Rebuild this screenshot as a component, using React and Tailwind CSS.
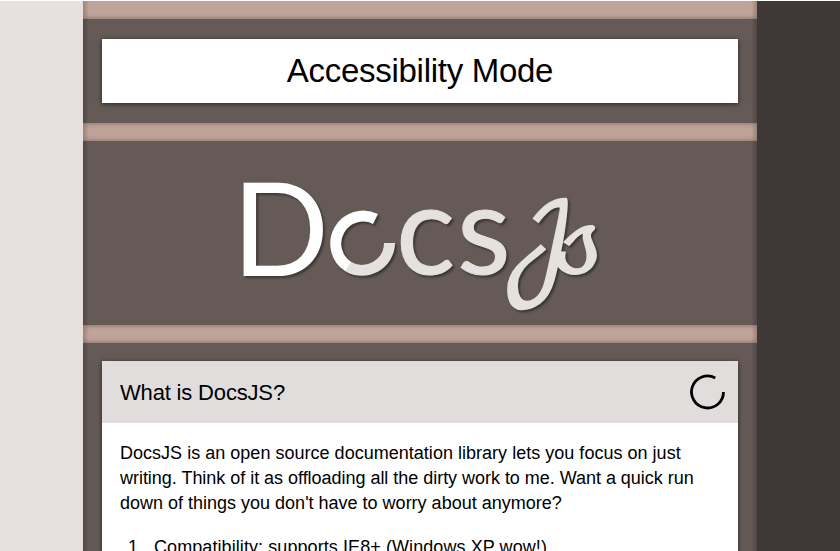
function Logo() {
  return (
    <svg
      className="block h-[184px] w-[674px] [filter:drop-shadow(2px_2px_1px_rgba(0,0,0,0.4))]"
      viewBox="83 141 674 184"
      role="img"
      aria-label="DocsJs"
    >
      <g fontFamily="Lato, sans-serif">
        <text x="232" y="276" fontSize="130" fill="#fff" textLength="97" lengthAdjust="spacingAndGlyphs">D</text>
        <text x="396" y="274" fontSize="124" fill="#e4e1df" stroke="#e4e1df" strokeWidth="1">c</text>
        <text x="457" y="274" fontSize="124" fill="#e4e1df" stroke="#e4e1df" strokeWidth="1">s</text>
      </g>
      {/* Two-tone progress ring */}
      <path d="M389.5 243 A27.5 27.5 0 0 1 348 266.5" fill="none" stroke="#e4e1df" strokeWidth="11" />
      <path d="M348.3 266.7 A27.5 27.5 0 0 1 375.5 219" fill="none" stroke="#fff" strokeWidth="11" />
      <g fontFamily="'DejaVu Math TeX Gyre', 'Liberation Serif', serif" fill="#e4e1df" stroke="#e4e1df" strokeWidth="2.4">
        <text transform="translate(501 281) scale(0.91 1.07)" fontSize="100">𝒥</text>
        <text transform="translate(549 272) scale(0.93 0.88)" fontSize="100">𝓈</text>
      </g>
    </svg>
  );
}

function Spinner() {
  return (
    <svg className="size-9" viewBox="0 0 36 36" fill="none" stroke="#000" strokeWidth="2.8">
      <path d="M33.5 18 A16 16 0 1 1 25.3 4" />
    </svg>
  );
}

export default function App() {
  return (
    <div className="flex h-[551px] w-[840px] flex-col overflow-hidden bg-white pt-px font-['Liberation_Sans',Arial,sans-serif] text-black">
      <div className="flex min-h-0 flex-1">
        <div className="w-[83px] shrink-0 bg-[#e7e0de]" />
        <main className="relative flex w-[674px] shrink-0 flex-col gap-[18px] overflow-hidden bg-[#c1a499] pt-[18px]">
          <section className="h-[104px] shrink-0 bg-[#655a56] px-[19px] pt-5 shadow-[0_0_5px_rgba(0,0,0,0.4)]">
            <h1 className="flex h-16 items-center justify-center bg-white text-[33px] tracking-[-0.28px] shadow-[0_1px_5px_rgba(0,0,0,0.6)]">
              Accessibility Mode
            </h1>
          </section>
          <section className="h-[184px] shrink-0 bg-[#655a56] shadow-[0_0_5px_rgba(0,0,0,0.4)]">
            <Logo />
          </section>
          <section className="h-[300px] shrink-0 bg-[#655a56] px-[19px] pt-[18px] shadow-[0_0_5px_rgba(0,0,0,0.4)]">
            <article className="h-full bg-white shadow-[0_1px_5px_rgba(0,0,0,0.6)]">
              <header className="flex h-[62px] items-center justify-between bg-[#e1dddd] pr-3 pl-[18px]">
                <h2 className="pt-px text-[22px] tracking-[-0.17px]">What is DocsJS?</h2>
                <Spinner />
              </header>
              <div className="px-[18px] pt-[18px] text-[18px] leading-[25px]">
                <p className="whitespace-nowrap">
                  <span className="tracking-[0.02px]">
                    DocsJS is an open source documentation library lets you focus on just
                  </span>
                  <br />
                  <span className="tracking-[-0.03px]">
                    writing. Think of it as offloading all the dirty work to me. Want a quick run
                  </span>
                  <br />
                  down of things you don't have to worry about anymore?
                </p>
                <ol className="pt-[19px] pl-[8px]">
                  <li className="flex">
                    <span className="w-[26px]">1.</span>
                    <span className="tracking-[0.08px]">Compatibility: supports IE8+ (Windows XP wow!)</span>
                  </li>
                </ol>
              </div>
            </article>
          </section>
          <div className="pointer-events-none absolute inset-y-0 left-0 w-1.5 bg-linear-to-r from-black/20 to-transparent" />
          <div className="pointer-events-none absolute inset-y-0 right-0 w-1.5 bg-linear-to-l from-black/20 to-transparent" />
        </main>
        <div className="flex-1 bg-[#3e3937]" />
      </div>
    </div>
  );
}
